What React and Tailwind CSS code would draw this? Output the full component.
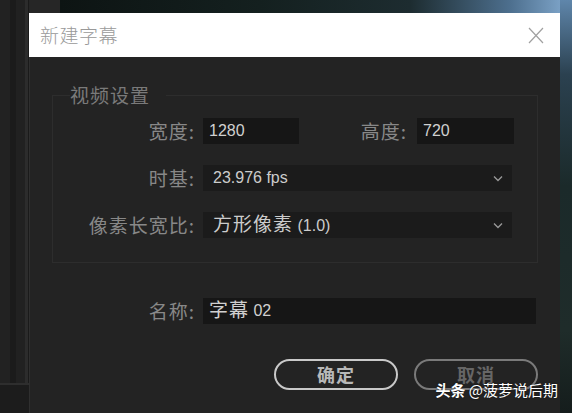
import React from 'react';

const cjk = "font-['Noto_Sans_CJK_SC',sans-serif]";
const mixed = "font-['Liberation_Sans','Noto_Sans_CJK_SC',sans-serif]";

const Label = ({ children, className = '' }) => (
  <div
    className={`${cjk} text-right text-[19px] leading-[26px] tracking-[1px] text-[#888888] ${className}`}
  >
    {children}
  </div>
);

const Chevron = () => (
  <svg width="10" height="7" viewBox="0 0 10 7" className="shrink-0">
    <polyline points="1,1.5 5,5.5 9,1.5" fill="none" stroke="#9a9a9a" strokeWidth="1.3" />
  </svg>
);

const Field = ({ children, className = '' }) => (
  <div
    className={`${mixed} flex h-[26px] items-center bg-[#161616] pl-[6px] text-[16px] text-[#d0d0d0] ${className}`}
  >
    {children}
  </div>
);

const Select = ({ children }) => (
  <div
    className={`${mixed} ml-[8px] flex h-[26px] w-[309px] items-center justify-between bg-[#1b1b1b] pl-[10px] pr-[9px] text-[16px] text-[#cccccc]`}
  >
    <span>{children}</span>
    <Chevron />
  </div>
);

const App = () => {
  return (
    <div className="relative flex h-[413px] w-[572px] overflow-hidden bg-[#10171a]">
      {/* left app panel */}
      <div className="flex h-full w-[29px] flex-col bg-[#232323]">
        <div className="flex flex-1">
          <div className="w-[10px] bg-[#222222]" />
          <div className="w-[6px] bg-[#1b1b1b]" />
          <div className="w-[9px] bg-[#212121]" />
          <div className="w-[3px] bg-[#2c2c2c]" />
          <div className="w-[1px] bg-[#1a1a1a]" />
        </div>
        <div className="h-[30px] border-t-2 border-[#2e2e2e] bg-[#1c1c1c]" />
      </div>

      {/* dialog column */}
      <div className="flex w-[531px] flex-col">
        <div className="flex h-[13px]">
          <div className="w-[31px] bg-[#262626]" />
          <div className="flex-1 bg-[linear-gradient(90deg,#0d1413_0%,#14201f_40%,#1d2c30_70%,#4d6f8e_90%,#7aa0c4_100%)]" />
        </div>

        <div className="flex flex-1 flex-col">
          {/* title bar */}
          <div className="flex h-[44px] items-center justify-between bg-white pl-[11px] pr-[16px]">
            <span className={`${cjk} text-[19px] font-light tracking-[0.5px] text-[#999999]`}>新建字幕</span>
            <svg width="16" height="17" viewBox="0 0 16 17">
              <path d="M1 1 L15 16 M15 1 L1 16" stroke="#a0a0a0" strokeWidth="1.2" fill="none" />
            </svg>
          </div>

          {/* body */}
          <div className="flex flex-1 flex-col border-l border-[#2f2f2f] bg-[#232323]">
            <fieldset className="mx-[22px] mt-[26px] border border-[#2d2d2d] pb-[24px] pt-[11px]">
              <legend
                className={`${cjk} ml-[17px] pr-[16px] text-[19px] leading-[24px] tracking-[1px] text-[#7a7a7a]`}
              >
                视频设置
              </legend>
              <div className="flex flex-col gap-[21px]">
                <div className="flex items-center pr-[23px]">
                  <Label className="w-[142px]">宽度:</Label>
                  <Field className="ml-[8px] w-[96px]">1280</Field>
                  <Label className="flex-1 pr-[10px]">高度:</Label>
                  <Field className="w-[97px]">720</Field>
                </div>
                <div className="flex items-center">
                  <Label className="w-[142px]">时基:</Label>
                  <Select>23.976 fps</Select>
                </div>
                <div className="flex items-center">
                  <Label className="w-[142px]">像素长宽比:</Label>
                  <Select>
                    <span className="text-[19px] tracking-[1px]">方形像素</span> (1.0)
                  </Select>
                </div>
              </div>
            </fieldset>

            <div className="ml-[22px] mt-[35px] flex items-center">
              <Label className="w-[143px]">名称:</Label>
              <Field className="ml-[8px] w-[333px]">
                <span className="text-[19px] tracking-[1px]">字幕</span>&nbsp;02
              </Field>
            </div>

            <div className="mt-[35px] flex justify-end gap-[16px] pr-[22px]">
              <button
                type="button"
                className={`${cjk} h-[31px] w-[124px] rounded-full border-2 border-[#c9c9c9] text-[18px] font-bold tracking-[1px] text-[#b8b8b8]`}
              >
                确定
              </button>
              <button
                type="button"
                className={`${cjk} h-[31px] w-[124px] rounded-full border-2 border-[#7a7a7a] text-[18px] font-bold tracking-[1px] text-[#666666]`}
              >
                取消
              </button>
            </div>
          </div>
        </div>
      </div>

      {/* photo strip on the right */}
      <div className="w-[12px] bg-[linear-gradient(180deg,#5f86ab_0%,#2b4150_18%,#1b2a2a_45%,#1f2c2a_80%,#151d1c_100%)]" />

      {/* watermark */}
      <div
        className={`${cjk} absolute bottom-[14px] right-[14px] text-[15px] leading-[18px] text-white [text-shadow:0_0_2px_rgba(0,0,0,0.6)]`}
      >
        <span className="font-bold">头条</span> @菠萝说后期
      </div>
    </div>
  );
};

export default App;
